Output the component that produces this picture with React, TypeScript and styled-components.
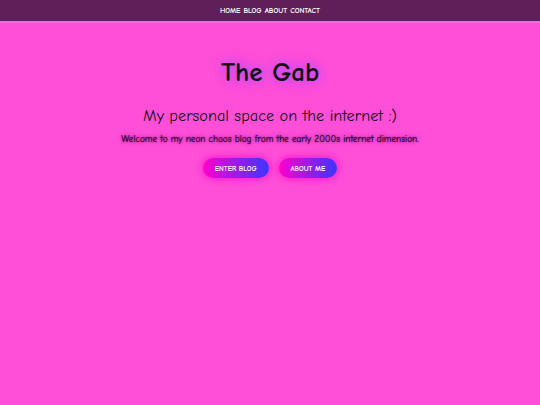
import React from 'react';
import styled, { createGlobalStyle } from 'styled-components';

const GlobalStyle = createGlobalStyle`
    html, body {
        margin: 0;
        padding: 0;
        background: #ff4fd8;
    }
    body {
        font-family: "Comic Sans MS", "Comic Neue", "DejaVu Sans", sans-serif;
        color: #111;
    }
`;

const Page = styled.div`
    min-height: 405px;
    display: flex;
    flex-direction: column;
    background: #ff4fd8;
`;

const NavBar = styled.nav`
    height: 21px;
    display: flex;
    align-items: center;
    justify-content: center;
    gap: 3px;
    background: #611f5a;
    border-bottom: 2px solid #ff66e0;
`;

const NavLink = styled.a`
    color: #fff;
    font-size: 7.5px;
    font-weight: 700;
    text-transform: uppercase;
    text-decoration: none;
`;

const Hero = styled.main`
    display: flex;
    flex-direction: column;
    align-items: center;
    padding-top: 34px;
`;

const Title = styled.h1`
    margin: 0;
    font-size: 27px;
    font-weight: 700;
    line-height: 32px;
    color: #111;
    text-shadow: 0 0 8px #b44cff, 0 0 16px #b44cff;
`;

const Subtitle = styled.h2`
    margin: 17px 0 0;
    font-size: 16.3px;
    font-weight: 400;
    line-height: 20px;
`;

const Intro = styled.p`
    margin: 7px 0 0;
    font-size: 9.3px;
    font-weight: 400;
    line-height: 12px;
    color: #000;
    text-shadow: 0 0 2px #6a1080, 0 0 5px #8a1f9a;
`;

const Buttons = styled.div`
    display: flex;
    gap: 10px;
    margin-top: 13px;
`;

const Button = styled.button`
    height: 20px;
    padding: 0 12px;
    border: none;
    border-radius: 10px;
    font-family: inherit;
    font-size: 7.3px;
    font-weight: 700;
    color: #fff;
    text-transform: uppercase;
    background: linear-gradient(90deg, #ff00cc, #3a36ff);
    box-shadow: 0 0 8px #ff00cc;
    cursor: pointer;
`;

const links = ['Home', 'Blog', 'About', 'Contact'];

const App: React.FC = () => {
    return (
        <>
            <GlobalStyle />
            <Page>
                <NavBar>
                    {links.map((item) => (
                        <NavLink key={item} href="#">
                            {item}
                        </NavLink>
                    ))}
                </NavBar>

                <Hero>
                    <Title>The Gab</Title>
                    <Subtitle>My personal space on the internet :)</Subtitle>
                    <Intro>Welcome to my neon chaos blog from the early 2000s internet dimension.</Intro>

                    <Buttons>
                        <Button>Enter Blog</Button>
                        <Button>About Me</Button>
                    </Buttons>
                </Hero>
            </Page>
        </>
    );
};
export default App;
